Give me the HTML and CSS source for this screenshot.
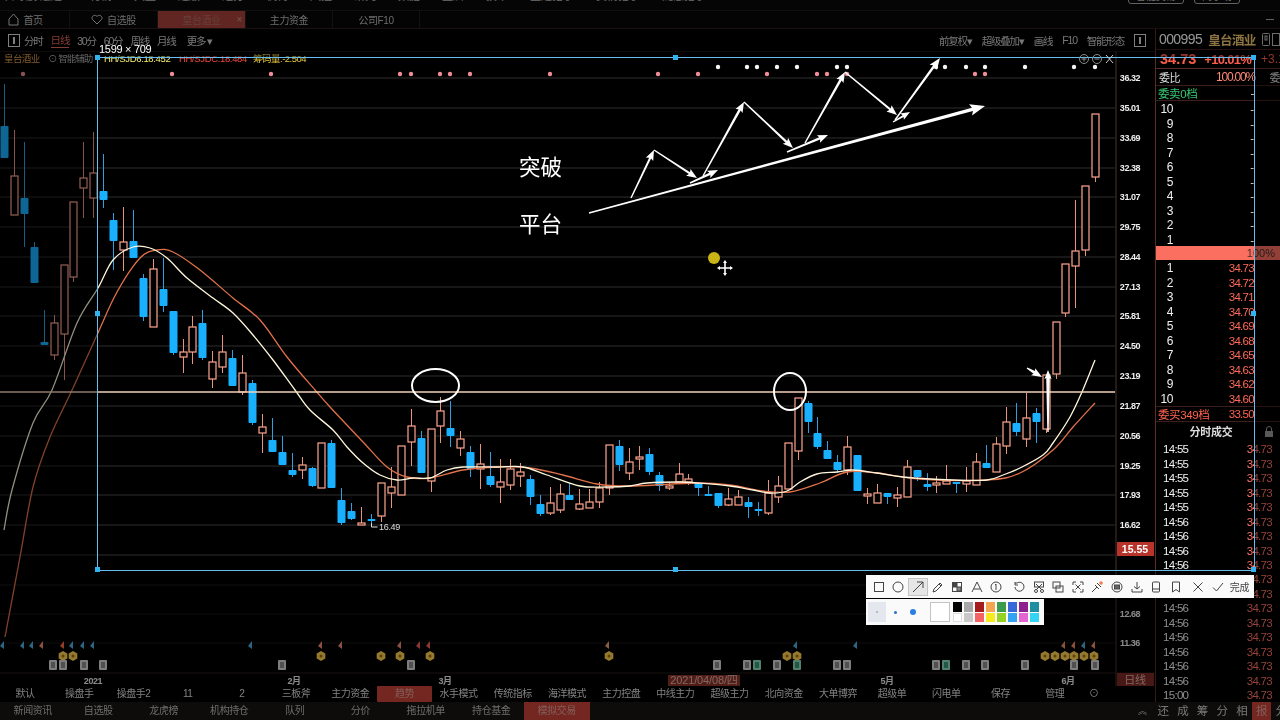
FILE: index.html
```html
<!DOCTYPE html>
<html lang="zh-CN">
<head>
  <meta charset="UTF-8">
  <title>皇台酒业 000995</title>
  <link rel="stylesheet" href="styles.css">
</head>
<body>
  <div class="app">
    <!-- top menu, cut off by the window edge -->
    <div class="menu-bar">
      <span class="menu-logo">自寻股 通达</span>
      <span>行情</span><span>大盘</span><span>题版</span><span>短打</span><span>机构</span><span>风控</span><span>研究</span><span>数据</span><span>盘后</span><span>技术</span><span>主题猎手</span><span>黄情猎手</span><span>随意猎手</span>
      <span class="menu-right"><i class="pill">智能交易</i><i class="pill">问小助</i></span>
    </div>

    <div class="tab-bar">
      <div class="tab tab-home">
        <svg width="11" height="13" viewBox="0 0 11 13"><path d="M1 6 5.500 1 10 6v6H1z" fill="none" stroke="#ccc"/></svg>
        首页
      </div>
      <div class="tab tab-fav">
        <svg width="12" height="11" viewBox="0 0 12 11"><path d="M6 10 1.500 5.500C-.5 3 3.500-.5 6 2.500 8.500-.5 12.500 3 10.500 5.500z" fill="none" stroke="#ccc"/></svg>
        自选股
      </div>
      <div class="tab tab-active">皇台酒业<span class="tab-close">×</span></div>
      <div class="tab tab-wide">主力资金</div>
      <div class="tab tab-wide">公司F10</div>
      <i class="tab-min"></i>
    </div>

    <div class="content">
      <div class="main">
        <div class="toolbar">
          <svg class="tool-icon" width="12" height="13" viewBox="0 0 12 13"><rect x=".5" y=".5" width="11" height="12" fill="none" stroke="#ddd"/><rect x="5" y="3" width="2" height="7" fill="#ddd"/></svg>
          <span>分时</span><span class="period-on">日线</span><span>30分</span><span>60分</span><span>周线</span><span>月线</span><span class="more">更多 ▾</span>
          <div class="toolbar-right">
            <span>前复权▾</span><span>超级叠加▾</span><span>画线</span><span>F10</span><span>智能形态</span>
            <svg width="12" height="13" viewBox="0 0 12 13"><rect x=".5" y=".5" width="11" height="12" fill="none" stroke="#ddd"/><rect x="5" y="3" width="2" height="7" fill="#ddd"/></svg>
          </div>
        </div>

        <div class="chart">
          <div class="chart-title">
            <span class="stock-name">皇台酒业</span>
            <span class="assist">⊙ 智能辅助</span>
            <span class="ma-a">HH/SJD6:18.452</span>
            <span class="ma-b">HH/SJDC:18.484</span>
            <span class="ma-c">筹码量:-2.504</span>
          </div>
          <svg id="chart" width="1155" height="634" viewBox="0 52 1155 634"></svg>
        </div>

        <div class="indicator-tabs">
          <span>默认</span><span>操盘手</span><span>操盘手2</span><span>11</span><span>2</span><span>三板斧</span><span>主力资金</span><span class="on">趋势</span><span>水手模式</span><span>传统指标</span><span>海洋模式</span><span>主力控盘</span><span>中线主力</span><span>超级主力</span><span>北向资金</span><span>大单博弈</span><span>超级单</span><span>闪电单</span><span>保存</span><span>管理</span><span class="more-dot">⊙</span>
        </div>
      </div>

      <aside class="side">
        <div class="side-head">
          <span class="code">000995</span><span class="name">皇台酒业</span>
          <svg class="head-icons" width="18" height="13" viewBox="0 0 18 13" fill="none" stroke="#bbb"><rect x=".5" y=".5" width="7" height="12" rx="1"/><rect x="3" y="3" width="2" height="4"/><rect x="10.500" y=".5" width="7" height="12"/></svg>
        </div>
        <div class="side-price"><b>34.73</b><b class="pct">+10.01%</b><span class="chg">+3.1</span></div>
        <div class="side-ratio"><span>委比</span><em>100.00%</em><span class="ratio-clip">委</span></div>
        <div class="side-label green"><span>委卖0档</span><span class="dash">-</span></div>
        <div class="book">
          <div class="book-row"><span>10</span><i>-</i></div>
          <div class="book-row"><span>9</span><i>-</i></div>
          <div class="book-row"><span>8</span><i>-</i></div>
          <div class="book-row"><span>7</span><i>-</i></div>
          <div class="book-row"><span>6</span><i>-</i></div>
          <div class="book-row"><span>5</span><i>-</i></div>
          <div class="book-row"><span>4</span><i>-</i></div>
          <div class="book-row"><span>3</span><i>-</i></div>
          <div class="book-row"><span>2</span><i>-</i></div>
          <div class="book-row"><span>1</span><i>-</i></div>
        </div>
        <div class="mid-bar">100%</div>
        <div class="book">
          <div class="book-row"><span>1</span><b>34.73</b></div>
          <div class="book-row"><span>2</span><b>34.72</b></div>
          <div class="book-row"><span>3</span><b>34.71</b></div>
          <div class="book-row"><span>4</span><b>34.70</b></div>
          <div class="book-row"><span>5</span><b>34.69</b></div>
          <div class="book-row"><span>6</span><b>34.68</b></div>
          <div class="book-row"><span>7</span><b>34.65</b></div>
          <div class="book-row"><span>8</span><b>34.63</b></div>
          <div class="book-row"><span>9</span><b>34.62</b></div>
          <div class="book-row"><span>10</span><b>34.60</b></div>
        </div>
        <div class="side-label red"><span>委买349档</span><b>33.50</b></div>
        <div class="trades-head">分时成交
          <svg class="lock" width="10" height="11" viewBox="0 0 10 11"><path d="M2.500 5V3a2.500 2.500 0 0 1 5 0v2" fill="none" stroke="#999"/><rect x="1" y="5" width="8" height="6" fill="#999"/></svg>
        </div>
        <div class="trades">
          <div><span>14:55</span><b>34.73</b></div>
          <div><span>14:55</span><b>34.73</b></div>
          <div><span>14:55</span><b>34.73</b></div>
          <div><span>14:55</span><b>34.73</b></div>
          <div><span>14:55</span><b>34.73</b></div>
          <div><span>14:56</span><b>34.73</b></div>
          <div><span>14:56</span><b>34.73</b></div>
          <div><span>14:56</span><b>34.73</b></div>
          <div><span>14:56</span><b>34.73</b></div>
          <div><span>14:56</span><b>34.73</b></div>
          <div><span>14:56</span><b>34.73</b></div>
          <div><span>14:56</span><b>34.73</b></div>
          <div><span>14:56</span><b>34.73</b></div>
          <div><span>14:56</span><b>34.73</b></div>
          <div><span>14:56</span><b>34.73</b></div>
          <div><span>14:56</span><b>34.73</b></div>
          <div><span>14:56</span><b>34.73</b></div>
          <div><span>15:00</span><b>34.73</b></div>
        </div>
      </aside>
    </div>

    <div class="bottom-bar">
      <span>新闻资讯</span><span>自选股</span><span>龙虎榜</span><span>机构持仓</span><span>队列</span><span>分价</span><span>拖拉机单</span><span>持仓基金</span><span class="on">模拟交易</span>
      <div class="bottom-right">
        <span class="chev">︽</span><span>还</span><span>成</span><span>筹</span><span>分</span><span>相</span><span class="on">报</span><span>分</span>
      </div>
    </div>

    <!-- screenshot tool: selection box dims everything outside it -->
    <div class="selection">
      <span class="size-tag">1599 × 709</span>
      <i class="handle h-tl"></i><i class="handle h-tm"></i><i class="handle h-tr"></i>
      <i class="handle h-ml"></i><i class="handle h-mr"></i>
      <i class="handle h-bl"></i><i class="handle h-bm"></i><i class="handle h-br"></i>
      <div class="sel-actions">
        <svg width="38" height="12" viewBox="0 0 38 12" fill="none" stroke="#8a8a8a">
          <circle cx="6" cy="6" r="4.500"/><path d="M3.500 6h5M6 3.500v5"/>
          <circle cx="19" cy="6" r="4.500"/><path d="M16.500 6h5"/>
          <path d="M28 2l7 8M35 2l-7 8" stroke="#ccc"/>
        </svg>
      </div>
    </div>

    <div class="snip-tools">
      <div class="snip-row">
        <span class="tool"><svg width="12" height="12" viewBox="0 0 12 12"><rect x="1.500" y="1.500" width="9" height="9"/></svg></span>
        <span class="tool"><svg width="12" height="12" viewBox="0 0 12 12"><circle cx="6" cy="6" r="5"/></svg></span>
        <span class="tool tool-on"><svg width="12" height="12" viewBox="0 0 12 12"><path d="M1 11 11 1M5 1h6v6"/></svg></span>
        <span class="tool"><svg width="12" height="12" viewBox="0 0 12 12"><path d="M1 11l1-3 6-6 2 2-6 6zM7 3l2 2"/></svg></span>
        <span class="tool"><svg width="12" height="12" viewBox="0 0 12 12"><rect x="1.500" y="1.500" width="9" height="9"/><rect x="2" y="2" width="4" height="4" fill="#444"/><rect x="6" y="6" width="4" height="4" fill="#888"/></svg></span>
        <span class="tool"><svg width="12" height="12" viewBox="0 0 12 12"><path d="M1 11 6 1l5 10M3 8h6"/></svg></span>
        <span class="tool"><svg width="12" height="12" viewBox="0 0 12 12"><circle cx="6" cy="6" r="5"/><path d="M5 4l1-1v6"/></svg></span>
        <span class="tool tool-gap"><svg width="12" height="12" viewBox="0 0 12 12"><path d="M2 6a4.500 4.500 0 1 0 2-4H2M2 1v3h3"/></svg></span>
        <span class="tool"><svg width="12" height="12" viewBox="0 0 12 12"><rect x="1.500" y="1" width="9" height="5"/><path d="M3 3l6 6M9 3 3 9"/><circle cx="3" cy="10" r="1.500"/><circle cx="9" cy="10" r="1.500"/></svg></span>
        <span class="tool"><svg width="12" height="12" viewBox="0 0 12 12"><rect x="1" y="1" width="7" height="6"/><rect x="4" y="5" width="7" height="6"/></svg></span>
        <span class="tool"><svg width="12" height="12" viewBox="0 0 12 12"><path d="M1 4V1h3M8 1h3v3M11 8v3H8M4 11H1V8M3.500 3.500l5 5M8.500 3.500l-5 5"/></svg></span>
        <span class="tool"><svg width="12" height="12" viewBox="0 0 12 12"><path d="M1 11l5-5M4 4l4 4M6 2l4 4"/><circle cx="10" cy="2" r="1.800" fill="#f08050" stroke="none"/></svg></span>
        <span class="tool"><svg width="12" height="12" viewBox="0 0 12 12"><circle cx="6" cy="6" r="5"/><rect x="3.500" y="4" width="5" height="4" fill="#666"/></svg></span>
        <span class="tool"><svg width="12" height="12" viewBox="0 0 12 12"><path d="M6 1v7M3 5.500 6 8l3-2.500M1 8v3h10V8"/></svg></span>
        <span class="tool"><svg width="12" height="12" viewBox="0 0 12 12"><rect x="2.500" y="1" width="7" height="10" rx="1"/><path d="M2.500 8h7"/></svg></span>
        <span class="tool"><svg width="12" height="12" viewBox="0 0 12 12"><path d="M2.500 1h7v10L6 8.500 2.500 11z"/></svg></span>
        <span class="tool tool-gap"><svg width="12" height="12" viewBox="0 0 12 12"><path d="M1.500 1.500l9 9M10.500 1.500l-9 9"/></svg></span>
        <span class="tool"><svg width="12" height="12" viewBox="0 0 12 12"><path d="M1 6.500 4.500 10 11 2"/></svg></span>
        <span class="done">完成</span>
      </div>
      <div class="snip-row2">
        <span class="dot-box"><i class="dot-s"></i></span>
        <span class="dot-cell"><i class="dot-m"></i></span>
        <span class="dot-cell"><i class="dot-l"></i></span>
        <span class="cur-color"></span>
        <div class="palette">
          <i class="c1"></i><i class="c2"></i><i class="c3"></i><i class="c4"></i><i class="c5"></i><i class="c6"></i><i class="c7"></i><i class="c8"></i>
          <i class="c9"></i><i class="c10"></i><i class="c11"></i><i class="c12"></i><i class="c13"></i><i class="c14"></i><i class="c15"></i><i class="c16"></i>
        </div>
      </div>
    </div>
  </div>
  <script src="chart.js"></script>
</body>
</html>
```
FILE: styles.css
```css
* { box-sizing: border-box; }
html, body { margin: 0; height: 100%; background: #000; overflow: hidden; }
body {
  font-family: "Liberation Sans", "Noto Sans CJK SC", sans-serif;
  color: #ddd;
}
.app {
  position: relative;
  width: 1280px;
  height: 720px;
  display: flex;
  flex-direction: column;
  overflow: hidden;
  filter: blur(0.3px);
}

/* top menu */
.menu-bar {
  height: 11px;
  flex: none;
  display: flex;
  gap: 22px;
  padding-left: 4px;
  overflow: hidden;
  align-items: flex-end;
  font-size: 11px;
  line-height: 16px;
  color: #bbb;
  background: #0c0a0a;
  border-bottom: 1px solid #201a1a;
}
.menu-bar span { margin-bottom: 6px; flex: none; }
.menu-logo { width: 60px; margin-right: 4px; }
.menu-right { margin-left: auto; margin-right: 40px; display: flex; gap: 10px; }
.pill {
  font-style: normal;
  border: 1px solid #aaa;
  border-radius: 3px;
  padding: 0 7px;
  font-size: 10px;
  line-height: 12px;
}

.tab-bar {
  height: 18px;
  flex: none;
  display: flex;
  align-items: stretch;
  font-size: 10px;
  letter-spacing: -.4px;
  color: #bbb;
  background: #090707;
  border-bottom: 1px solid #2a1e1c;
}
.tab {
  display: flex;
  align-items: center;
  justify-content: center;
  gap: 4px;
  border-right: 1px solid #221c1a;
}
.tab-home { width: 70px; padding-right: 18px; }
.tab-fav { width: 88px; }
.tab-active {
  position: relative;
  width: 88px;
  background: #a8423a;
  color: #b06a62;
}
.tab-close { position: absolute; right: 3px; color: #c89088; }
.tab-wide { width: 87px; }
.tab-min {
  width: 8px;
  height: 1px;
  margin: 8px 6px 0 auto;
  background: #aaa;
}

.content { flex: 1; display: flex; min-height: 0; }
.main { width: 1155px; flex: none; display: flex; flex-direction: column; }

.toolbar {
  height: 23px;
  flex: none;
  display: flex;
  align-items: center;
  gap: 8px;
  padding-left: 8px;
  font-size: 10.500px;
  letter-spacing: -1.200px;
  color: #ccc;
  border-bottom: 1px solid #1c1614;
}
.tool-icon { margin-right: -4px; }
.period-on { color: #e06a58; border-bottom: 1px solid #e06a58; }
.more { margin-left: 3px; }
.toolbar-right { margin-left: auto; display: flex; align-items: center; gap: 10px; padding-right: 9px; }

.chart { position: relative; flex: 1; min-height: 0; }
.chart svg { display: block; }
.chart-title {
  position: absolute;
  left: 4px;
  top: 0;
  display: flex;
  font-size: 9.500px;
  line-height: 13px;
  white-space: nowrap;
}
.stock-name { width: 44px; color: #d89a50; letter-spacing: -.6px; }
.assist { width: 56px; color: #aaa; letter-spacing: -1px; }
.ma-a { width: 75px; color: #f4ee70; letter-spacing: -.35px; }
.ma-b { width: 74px; color: #f04a3a; letter-spacing: -.35px; }
.ma-c { color: #e8c840; letter-spacing: -.5px; }

#chart text { font-family: "Liberation Sans", "Noto Sans CJK SC", sans-serif; }
.axis-label { font-size: 9px; font-weight: bold; letter-spacing: -.45px; fill: #eee; text-anchor: middle; }
.date-label { font-size: 9px; font-weight: bold; letter-spacing: -.4px; fill: #eee; text-anchor: middle; }
.note-label { font-size: 9px; letter-spacing: -.3px; fill: #ddd; }
.note-big { font-size: 21.500px; fill: #fff; }
.axis-now { font-size: 10.500px; font-weight: bold; fill: #fff; text-anchor: middle; }
.date-now { font-size: 11px; letter-spacing: -.15px; fill: #e0b0a8; text-anchor: middle; }

.indicator-tabs {
  height: 16px;
  flex: none;
  display: flex;
  font-size: 10px;
  letter-spacing: -.5px;
  color: #ddd;
  margin-left: -2px;
}
.indicator-tabs span { width: 54.200px; flex: none; text-align: center; line-height: 16px; }
.indicator-tabs .on { background: #c8433a; color: #e0a098; border-radius: 1px; }
.indicator-tabs .more-dot { width: 16px; margin-left: 4px; }

/* right panel */
.side {
  flex: 1;
  display: flex;
  flex-direction: column;
  border-left: 1px solid #5c2c24;
  font-size: 11.500px;
  min-width: 0;
  overflow: hidden;
}
.side-head {
  height: 21px;
  flex: none;
  display: flex;
  align-items: center;
  gap: 6px;
  padding-left: 3px;
  border-bottom: 1px solid #3c1e1a;
}
.code { font-size: 14px; letter-spacing: -.6px; color: #fff; }
.name { font-size: 12.500px; font-weight: bold; color: #f0c870; white-space: nowrap; letter-spacing: -.6px; }
.head-icons { flex: none; }
.side-price {
  height: 19px;
  flex: none;
  display: flex;
  align-items: center;
  gap: 8px;
  padding-left: 4px;
  font-size: 14.500px;
  color: #ff5d4c;
  white-space: nowrap;
  border-bottom: 1px solid #5c2c24;
}
.side-price .pct { font-size: 13px; letter-spacing: -.7px; }
.chg { font-size: 12px; margin-left: 2px; }
.side-ratio {
  height: 17px;
  flex: none;
  display: flex;
  align-items: center;
  padding-left: 3px;
  font-size: 11px;
  letter-spacing: -.4px;
  white-space: nowrap;
  border-bottom: 1px solid #3c1e1a;
}
.side-ratio em { margin-left: auto; font-style: normal; font-size: 12px; color: #ff8a78; letter-spacing: -1.200px; }
.ratio-clip { width: 25px; flex: none; text-align: right; }
.side-label {
  height: 15px;
  flex: none;
  display: flex;
  justify-content: space-between;
  align-items: center;
  padding: 0 26px 0 2px;
  font-size: 11.500px;
  letter-spacing: -.4px;
}
.side-label.green { color: #38c872; border-bottom: 1px solid #3c1e1a; }
.side-label.red { color: #ff6350; border-top: 1px solid #3c1e1a; font-weight: normal; }
.side-label b { font-weight: normal; font-size: 11.500px; letter-spacing: -.7px; }
.dash { color: #ddd; }
.book { flex: none; padding-top: 1px; }
.book-row {
  height: 14.500px;
  display: flex;
  justify-content: space-between;
  align-items: center;
  padding-right: 26px;
  line-height: 14px;
}
.book-row span { width: 17px; text-align: right; color: #f0f0f0; font-size: 12px; letter-spacing: -.4px; }
.book-row i { font-style: normal; color: #ddd; }
.book-row b { font-weight: normal; color: #ff6a58; letter-spacing: -.7px; }
.mid-bar {
  height: 14px;
  flex: none;
  margin-top: -1px;
  background: #fb6f60;
  color: #40302c;
  font-size: 11px;
  line-height: 14px;
  text-align: right;
  padding-right: 5px;
}
.trades-head {
  position: relative;
  height: 21px;
  flex: none;
  text-align: center;
  font-size: 11px;
  line-height: 20px;
  letter-spacing: -.3px;
  font-weight: bold;
  color: #ddd;
  padding-right: 14px;
  border-top: 1px solid #3c1e1a;
}
.lock { position: absolute; right: 6px; top: 4px; }
.trades > div {
  height: 14.470px;
  display: flex;
  justify-content: space-between;
  align-items: center;
  padding: 0 8px 0 7px;
  letter-spacing: -.7px;
}
.trades span { color: #f0f0f0; }
.trades b { font-weight: normal; color: #ff7262; }

.bottom-bar {
  height: 18px;
  flex: none;
  display: flex;
  font-size: 10px;
  letter-spacing: -.4px;
  color: #bbb;
  background: #181614;
  line-height: 18px;
}
.bottom-bar > span { width: 65.500px; flex: none; text-align: center; }
.bottom-bar .on { background: #c8433a; color: #e0a098; }
.bottom-right {
  margin-left: auto;
  display: flex;
  font-size: 11.500px;
  color: #ccc;
  margin-right: -11px;
}
.bottom-right span { width: 19.700px; text-align: center; flex: none; }
.bottom-right .chev { font-size: 9px; margin-right: 1px; }

/* screenshot tool overlay */
.selection {
  position: absolute;
  left: 97px;
  top: 57px;
  width: 1158px;
  height: 514px;
  border: 1px solid #66bfee;
  box-shadow: 0 0 0 1400px rgba(0, 0, 0, .42);
}
.size-tag {
  position: absolute;
  left: 1px;
  top: -15px;
  font-size: 11px;
  letter-spacing: -.3px;
  line-height: 13px;
  color: #fff;
  white-space: nowrap;
}
.handle {
  position: absolute;
  width: 5px;
  height: 5px;
  background: #2fb4f0;
  margin: -3px 0 0 -3px;
}
.h-tl, .h-ml, .h-bl { left: 0; }
.h-tm, .h-bm { left: 50%; }
.h-tr, .h-mr, .h-br { left: 100%; }
.h-tl, .h-tm, .h-tr { top: 0; }
.h-ml, .h-mr { top: 50%; }
.h-bl, .h-bm, .h-br { top: 100%; }
.sel-actions { position: absolute; left: 980px; top: -5px; line-height: 0; }

.snip-tools { position: absolute; left: 866px; top: 575px; }
.snip-row {
  width: 388px;
  height: 23px;
  display: flex;
  align-items: center;
  padding-left: 3px;
  background: #fafafa;
}
.tool {
  width: 19.600px;
  height: 18px;
  flex: none;
  display: flex;
  align-items: center;
  justify-content: center;
  border: 1px solid transparent;
}
.tool svg { fill: none; stroke: #444; stroke-width: 1; }
.tool-on { background: #e6e6e6; border-color: #c4c4c4; }
.tool-gap { margin-left: 3px; }
.done { font-size: 10px; color: #444; margin-left: 2px; letter-spacing: -.3px; }
.snip-row2 {
  width: 178px;
  height: 26px;
  margin-top: 1px;
  padding: 2px;
  display: flex;
  align-items: center;
  background: #fafafa;
}
.dot-box {
  width: 18px;
  height: 20px;
  background: #e4e8ee;
  display: flex;
  align-items: center;
  justify-content: center;
}
.dot-cell { width: 18px; display: flex; justify-content: center; }
.dot-s { width: 2px; height: 2px; background: #aab; border-radius: 50%; }
.dot-m { width: 3px; height: 3px; background: #2a6fc8; border-radius: 50%; }
.dot-l { width: 6px; height: 6px; background: #2a7fe0; border-radius: 50%; }
.cur-color {
  width: 20px;
  height: 20px;
  margin-left: 8px;
  background: #fff;
  border: 1px solid #c4c4c4;
}
.palette {
  display: grid;
  grid-template-columns: repeat(8, 9px);
  grid-auto-rows: 9.500px;
  gap: 1px 2px;
  margin-left: 3px;
}
.palette i { display: block; }
.c1 { background: #000; } .c2 { background: #a8a8a8; } .c3 { background: #a41c1c; } .c4 { background: #f4a552; }
.c5 { background: #3c9a4c; } .c6 { background: #3568d8; } .c7 { background: #8e1f8e; } .c8 { background: #1e8ea0; }
.c9 { background: #fff; border: 1px solid #ddd; } .c10 { background: #c8c8c8; } .c11 { background: #f46464; } .c12 { background: #f8ea1c; }
.c13 { background: #94d224; } .c14 { background: #34a4f2; } .c15 { background: #e464d4; } .c16 { background: #34d4f4; }
```
FILE: chart.js
```js
const NS = 'http://www.w3.org/2000/svg';
const svg = document.getElementById('chart');

function el(name, attrs, text) {
  const node = document.createElementNS(NS, name);
  for (const k in attrs) node.setAttribute(k, attrs[k]);
  if (text) node.textContent = text;
  svg.appendChild(node);
  return node;
}

// grid + price axis
const axis = [
  ['36.32', 78], ['35.01', 108], ['33.69', 138], ['32.38', 168], ['31.07', 197], ['29.75', 227],
  ['28.44', 257], ['27.13', 287], ['25.81', 316], ['24.50', 346], ['23.19', 376], ['21.87', 406],
  ['20.56', 436], ['19.25', 466], ['17.93', 495], ['16.62', 525], ['', 555], ['', 585],
  ['12.68', 614], ['11.36', 643]
];
axis.forEach(([label, y]) => {
  el('line', { x1: 0, x2: 1115, y1: y, y2: y, stroke: y > 570 ? '#1a1a1a' : '#2e2e2e' });
  if (label) el('text', { x: 1130, y: y + 3, class: 'axis-label' }, label);
});
el('line', { x1: 1116, x2: 1116, y1: 52, y2: 686, stroke: '#4a3430' });
el('rect', { x: 1117, y: 542, width: 37, height: 14, fill: '#b8342a' });
el('text', { x: 1135, y: 553, class: 'axis-now' }, '15.55');

// high, top, bottom, low, blue?
const candles = [
  [84,126,158,158,1],[130,176,215,215,0],[142,198,214,247,1],[242,247,283,283,1],[310,342,345,345,1],
  [315,323,355,360,0],[265,265,334,380,0],[202,202,277,282,0],[142,178,188,218,0],[132,173,198,218,0],
  [154,191,200,208,1],[213,220,241,270,1],[207,242,250,271,0],[210,241,258,258,1],[274,278,317,321,1],
  [259,269,327,327,0],[258,289,306,312,1],[311,311,353,355,1],[339,352,357,373,0],[316,327,352,364,0],
  [310,323,358,360,1],[351,362,379,388,0],[335,352,367,373,0],[350,358,386,386,1],[355,373,392,395,0],
  [380,383,423,425,1],[414,427,433,453,0],[418,440,452,452,1],[436,452,465,465,1],[453,470,475,477,1],
  [457,465,470,479,0],[467,468,486,487,1],[443,443,488,488,0],[440,443,488,488,1],[488,500,523,525,1],
  [503,511,519,520,1],[507,523,525,525,0],[514,519,521,523,1],[483,483,516,522,0],[467,487,493,508,0],
  [446,446,495,495,0],[409,426,442,466,0],[431,438,473,473,1],[429,429,481,492,0],[397,411,426,443,0],
  [401,428,436,447,1],[431,439,448,456,0],[446,452,469,477,1],[444,464,469,489,0],[452,476,485,487,1],
  [459,482,487,503,0],[459,469,485,490,0],[463,472,476,487,0],[475,479,497,505,1],[495,504,514,516,1],
  [487,503,513,515,0],[484,494,510,513,0],[483,495,500,500,1],[489,504,509,510,0],[489,502,508,508,0],
  [482,488,502,508,0],[445,445,488,495,0],[440,446,465,471,1],[448,462,473,480,0],[446,457,458,470,0],
  [448,454,472,475,1],[472,475,486,491,1],[482,486,488,490,0],[463,474,482,482,0],[474,479,482,485,0],
  [482,483,488,496,1],[486,494,495,495,1],[493,493,506,508,1],[488,499,505,506,0],[490,497,505,505,0],
  [497,502,507,518,1],[502,509,511,516,1],[480,493,513,515,0],[476,486,497,503,0],[443,443,489,489,0],
  [398,398,451,460,0],[401,403,422,433,1],[417,433,447,449,1],[441,450,459,459,1],[455,462,470,473,1],
  [436,447,470,475,0],[455,455,491,491,1],[488,494,496,504,0],[484,493,503,503,0],[493,493,497,504,1],
  [487,495,498,507,0],[460,467,497,497,0],[470,470,477,481,1],[473,484,487,491,1],[476,483,484,493,0],
  [465,481,484,484,0],[482,482,483,493,1],[467,481,484,492,0],[453,462,485,485,0],[445,463,468,468,1],
  [437,444,472,472,0],[407,422,446,454,0],[403,423,432,436,1],[393,418,439,447,0],[408,413,422,443,1],
  [375,375,429,433,0],[322,322,374,379,0],[264,264,313,317,0],[200,251,266,308,0],[186,186,250,256,0],
  [114,114,177,182,0]
];
candles.forEach(([high, top, bottom, low, blue], i) => {
  const x = Math.round(4 + 9.92 * i) + 0.5;
  const h = Math.max(bottom - top, 2);
  el('line', { x1: x, x2: x, y1: high, y2: low, stroke: blue ? '#2f9fe4' : '#e8937a' });
  if (blue) {
    el('rect', { x: x - 4, y: top, width: 8, height: h, rx: 1, fill: '#18b0ff' });
  } else {
    el('rect', { x: x - 3.5, y: top, width: 7, height: h, fill: '#000', stroke: '#ffa690', 'stroke-width': 1.2 });
  }
});

// moving averages, smoothed through the sampled points
const whiteMa = [[4,530],[12,490],[33,423],[52,390],[77,323],[98,288],[113,260],[133,247],[150,248],[167,258],[187,278],[213,298],[233,313],[253,335],[273,360],[295,390],[310,410],[333,430],[347,447],[363,463],[380,475],[397,480],[413,478],[430,478],[447,470],[463,467],[497,467],[523,467],[547,475],[580,486],[607,487],[630,486],[647,483],[680,482],[697,483],[730,486],[753,490],[770,493],[787,491],[800,482],[817,474],[837,472],[853,470],[877,473],[903,477],[953,480],[987,480],[1003,475],[1020,468],[1043,455],[1053,443],[1070,417],[1082,392],[1095,360]];
const orangeMa = [[5,637],[20,557],[33,487],[50,437],[73,388],[97,335],[117,292],[140,258],[157,250],[173,252],[200,270],[233,298],[260,320],[287,357],[315,390],[330,407],[363,442],[387,467],[407,477],[430,478],[463,470],[497,467],[530,468],[563,475],[597,484],[630,486],[697,483],[730,485],[763,491],[790,492],[820,483],[847,472],[877,473],[920,479],[987,480],[1020,473],[1053,450],[1073,427],[1095,403]];
function smooth(pts) {
  let d = `M${pts[0]}`;
  for (let i = 0; i < pts.length - 1; i++) {
    const p0 = pts[i - 1] || pts[i], p1 = pts[i], p2 = pts[i + 1], p3 = pts[i + 2] || p2;
    const c1 = [p1[0] + (p2[0] - p0[0]) / 6, p1[1] + (p2[1] - p0[1]) / 6];
    const c2 = [p2[0] - (p3[0] - p1[0]) / 6, p2[1] - (p3[1] - p1[1]) / 6];
    d += `C${c1} ${c2} ${p2}`;
  }
  return d;
}
el('path', { d: smooth(orangeMa), fill: 'none', stroke: '#e0714a', 'stroke-width': 1.3 });
el('path', { d: smooth(whiteMa), fill: 'none', stroke: '#fff6dc', 'stroke-width': 1.3 });

// level line
el('line', { x1: 0, x2: 1115, y1: 392, y2: 392, stroke: '#f4d0b8', 'stroke-width': 1.3 });

// signal dots along the top
[23,172,271,400,411,440,450,470,550,658,698,767,817,827,847,975,985].forEach(x => {
  el('circle', { cx: x, cy: 74, r: 2.2, fill: '#f08c98' });
});
[718,747,757,777,797,837,847,936,945,966,985,1025,1074,1095].forEach(x => {
  el('circle', { cx: x, cy: 67, r: 2.2, fill: '#f4f4f4' });
});

// low marker
el('path', { d: 'M371.500 523v4h6', fill: 'none', stroke: '#ddd' });
el('text', { x: 379, y: 530, class: 'note-label' }, '16.49');

// signal rows under the chart
const flag = (x, c) => el('path', { d: `M${x + 2} 641v8l-4-3z`, fill: c });
[[2,'#4fb0e0'],[22,'#4fb0e0'],[31,'#4fb0e0'],[41,'#f08a70'],[62,'#ff6a40'],[71,'#4fb0e0'],[82,'#4fb0e0'],[92,'#4fb0e0'],[250,'#4fb0e0'],[320,'#f08a70'],[340,'#f08a70'],[399,'#f08a70'],[418,'#f06060'],[428,'#f06060'],[607,'#f0a070'],[795,'#4fb0e0'],[855,'#4fb0e0'],[1063,'#f08a60'],[1073,'#f08a60'],[1083,'#4fb0e0'],[1093,'#f08a60']].forEach(f => flag(f[0], f[1]));
[63,73,321,381,400,430,609,787,797,1045,1055,1065,1074,1084,1094].forEach(x => {
  const hex = [0, 1, 2, 3, 4, 5].map(k => {
    const a = Math.PI / 3 * k + Math.PI / 2;
    return `${x + 5 * Math.cos(a)},${656 + 5 * Math.sin(a)}`;
  });
  el('polygon', { points: hex.join(' '), fill: '#ffd050' });
  el('circle', { cx: x, cy: 656, r: 1.5, fill: '#a07010' });
});
[53,63,84,103,282,411,717,747,777,837,847,936,966,985,1025,1074,1095].forEach(x => {
  el('rect', { x: x - 4, y: 660, width: 8, height: 10, rx: 1, fill: '#d8d8d8' });
  el('rect', { x: x - 2, y: 662, width: 4, height: 6, fill: '#8a8a8a' });
});
[757,797,946].forEach(x => {
  el('rect', { x: x - 4, y: 660, width: 8, height: 10, rx: 1, fill: '#8cdcc0' });
  el('rect', { x: x - 2, y: 662, width: 4, height: 6, fill: '#3c9a78' });
});

// date axis
el('line', { x1: 0, x2: 1155, y1: 673, y2: 673, stroke: '#2a1e1c' });
[['2021',93],['2月',294],['3月',445],['5月',887],['6月',1068]].forEach(([t, x]) => {
  el('text', { x: x, y: 684, class: 'date-label' }, t);
});
el('rect', { x: 668, y: 675, width: 72, height: 11, fill: '#8c3228' });
el('text', { x: 704, y: 684, class: 'date-now' }, '2021/04/08/四');
el('rect', { x: 1117, y: 673, width: 37, height: 13, fill: '#7c2a26' });
el('text', { x: 1135, y: 684, class: 'date-now' }, '日线');

// hand-drawn annotations
function arrow(x1, y1, x2, y2, neck, head) {
  const len = Math.hypot(x2 - x1, y2 - y1);
  const ux = (x2 - x1) / len, uy = (y2 - y1) / len;
  const nx = -uy, ny = ux;
  const at = (d, s) => `${x1 + ux * d + nx * s},${y1 + uy * d + ny * s}`;
  const pts = [
    at(0, 0.7), at(len - head, neck / 2), at(len - head * 1.15, head * 0.45),
    at(len, 0), at(len - head * 1.15, -head * 0.45), at(len - head, -neck / 2), at(0, -0.7)
  ];
  el('polygon', { points: pts.join(' '), fill: '#fff' });
}
[
  [589,213,985,106,3.5,13],[631,198,654,150,2.2,9],[654,150,697,178,2.2,9],[690,183,718,170,2.5,9],
  [703,176,744,102,2.5,9],[744,102,793,148,2.2,9],[787,152,828,135,2.5,9],[805,143,845,72,2.5,9],
  [845,72,897,115,2.2,9],[893,122,910,112,2,8],[895,120,940,58,2.5,10],[1027,368,1042,377,3,9],[1048,432,1048,370,3.5,8]
].forEach(a => arrow(...a));
el('ellipse', { cx: 435.5, cy: 385.5, rx: 23.5, ry: 16.5, fill: 'none', stroke: '#fff', 'stroke-width': 2 });
el('ellipse', { cx: 790, cy: 391.5, rx: 16, ry: 18.5, fill: 'none', stroke: '#fff', 'stroke-width': 2 });
el('text', { x: 519, y: 175, class: 'note-big' }, '突破');
el('text', { x: 519, y: 232, class: 'note-big' }, '平台');

// mouse cursor
el('circle', { cx: 714, cy: 258, r: 6, fill: '#c8b414' });
el('path', { d: 'M725 262v12M719 268h12', stroke: '#fff', 'stroke-width': 1.6, fill: 'none' });
el('path', { d: 'M725 260l-2 3h4zM725 276l-2-3h4zM717 268l3-2v4zM733 268l-3-2v4z', fill: '#fff' });
```
